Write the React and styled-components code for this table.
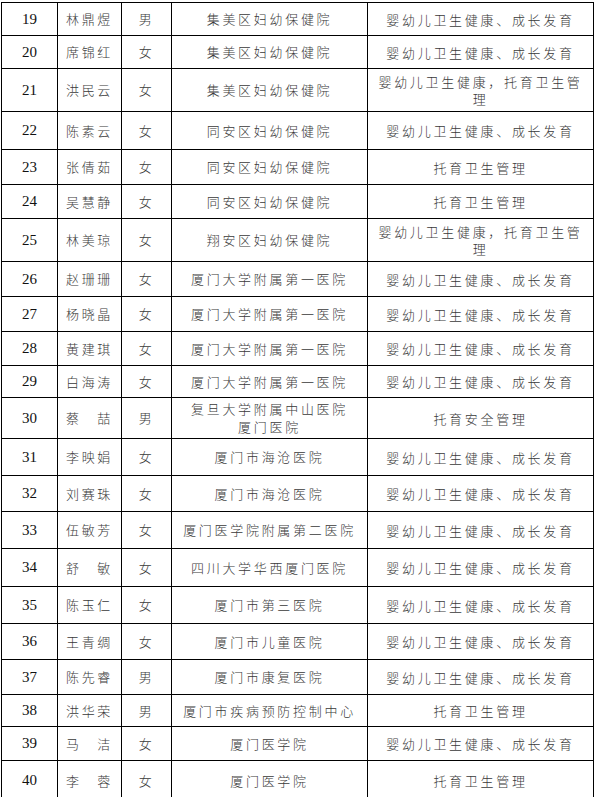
import React from 'react';
import styled, { createGlobalStyle } from 'styled-components';

const GlobalStyle = createGlobalStyle`
  html, body {
    margin: 0;
    padding: 0;
    background: #ffffff;
  }
`;

const columns = [56, 64, 50, 196, 226];

const rows = [
  { no: 19, name: '林鼎煜', sex: '男', org: ['集美区妇幼保健院'], field: '婴幼儿卫生健康、成长发育', h: 33 },
  { no: 20, name: '席锦红', sex: '女', org: ['集美区妇幼保健院'], field: '婴幼儿卫生健康、成长发育', h: 33 },
  { no: 21, name: '洪民云', sex: '女', org: ['集美区妇幼保健院'], field: '婴幼儿卫生健康，托育卫生管理', h: 43 },
  { no: 22, name: '陈素云', sex: '女', org: ['同安区妇幼保健院'], field: '婴幼儿卫生健康、成长发育', h: 38 },
  { no: 23, name: '张倩茹', sex: '女', org: ['同安区妇幼保健院'], field: '托育卫生管理', h: 35 },
  { no: 24, name: '吴慧静', sex: '女', org: ['同安区妇幼保健院'], field: '托育卫生管理', h: 34 },
  { no: 25, name: '林美琼', sex: '女', org: ['翔安区妇幼保健院'], field: '婴幼儿卫生健康，托育卫生管理', h: 43 },
  { no: 26, name: '赵珊珊', sex: '女', org: ['厦门大学附属第一医院'], field: '婴幼儿卫生健康、成长发育', h: 35 },
  { no: 27, name: '杨晓晶', sex: '女', org: ['厦门大学附属第一医院'], field: '婴幼儿卫生健康、成长发育', h: 35 },
  { no: 28, name: '黄建琪', sex: '女', org: ['厦门大学附属第一医院'], field: '婴幼儿卫生健康、成长发育', h: 34 },
  { no: 29, name: '白海涛', sex: '女', org: ['厦门大学附属第一医院'], field: '婴幼儿卫生健康、成长发育', h: 32 },
  { no: 30, name: '蔡　喆', sex: '男', org: ['复旦大学附属中山医院', '厦门医院'], field: '托育安全管理', h: 41 },
  { no: 31, name: '李映娟', sex: '女', org: ['厦门市海沧医院'], field: '婴幼儿卫生健康、成长发育', h: 37 },
  { no: 32, name: '刘赛珠', sex: '女', org: ['厦门市海沧医院'], field: '婴幼儿卫生健康、成长发育', h: 36 },
  { no: 33, name: '伍敏芳', sex: '女', org: ['厦门医学院附属第二医院'], field: '婴幼儿卫生健康、成长发育', h: 37 },
  { no: 34, name: '舒　敏', sex: '女', org: ['四川大学华西厦门医院'], field: '婴幼儿卫生健康、成长发育', h: 38 },
  { no: 35, name: '陈玉仁', sex: '女', org: ['厦门市第三医院'], field: '婴幼儿卫生健康、成长发育', h: 37 },
  { no: 36, name: '王青绸', sex: '女', org: ['厦门市儿童医院'], field: '婴幼儿卫生健康、成长发育', h: 36 },
  { no: 37, name: '陈先睿', sex: '男', org: ['厦门市康复医院'], field: '婴幼儿卫生健康、成长发育', h: 35 },
  { no: 38, name: '洪华荣', sex: '男', org: ['厦门市疾病预防控制中心'], field: '托育卫生管理', h: 32 },
  { no: 39, name: '马　洁', sex: '女', org: ['厦门医学院'], field: '婴幼儿卫生健康、成长发育', h: 34 },
  { no: 40, name: '李　蓉', sex: '女', org: ['厦门医学院'], field: '托育卫生管理', h: 40 },
];

function App() {
  return (
    <>
      <GlobalStyle />
      <Page>
        <Table>
          <colgroup>
            {columns.map((w, i) => (
              <Col key={i} width={w} />
            ))}
          </colgroup>
          <tbody>
            {rows.map((r) => (
              <Row key={r.no} $height={r.h}>
                <NumCell>{r.no}</NumCell>
                <TextCell>{r.name}</TextCell>
                <TextCell>{r.sex}</TextCell>
                <TextCell>
                  {r.org.map((line, i) => (
                    <Line key={i}>{line}</Line>
                  ))}
                </TextCell>
                <FieldCell>{r.field}</FieldCell>
              </Row>
            ))}
          </tbody>
        </Table>
      </Page>
    </>
  );
}

export default App;

const Page = styled.div`
  padding: 2px 0 0 1px;
  width: 595px;
  box-sizing: border-box;
`;

const Table = styled.table`
  border-collapse: collapse;
  table-layout: fixed;
  width: 592px;
`;

const Col = styled.col`
  width: ${(props) => props.width}px;
`;

const Row = styled.tr`
  height: ${(props) => props.$height}px;
`;

const Cell = styled.td`
  border: 1px solid #000;
  padding: 0 5px;
  text-align: center;
  vertical-align: middle;
  box-sizing: border-box;
`;

const NumCell = styled(Cell)`
  font-family: "Liberation Serif", "Times New Roman", serif;
  font-size: 15px;
  color: #111;
`;

const TextCell = styled(Cell)`
  font-family: "Noto Sans CJK SC", "Noto Sans", sans-serif;
  font-size: 13px;
  font-weight: 300;
  line-height: 18px;
  letter-spacing: 2.7px;
  color: #3a3a3a;
  white-space: nowrap;
`;

const FieldCell = styled(Cell)`
  font-family: "Noto Sans CJK SC", "Noto Sans", sans-serif;
  font-size: 13px;
  font-weight: 300;
  line-height: 17px;
  letter-spacing: 2.7px;
  color: #3a3a3a;
  padding: 0 6px;
`;

const Line = styled.div`
  line-height: 18px;
`;
